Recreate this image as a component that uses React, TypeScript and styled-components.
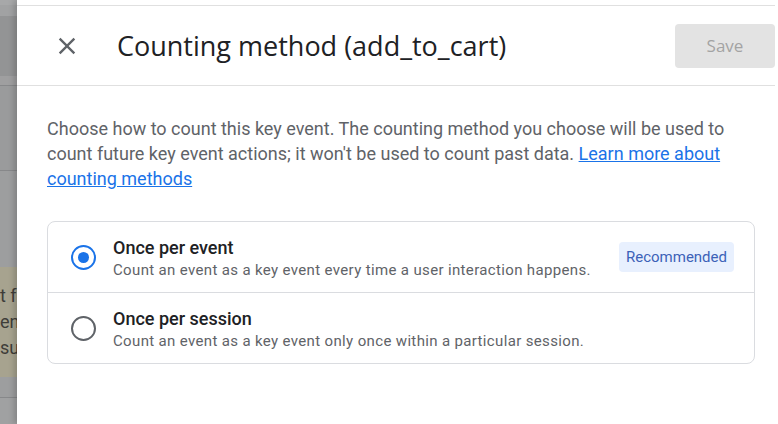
import * as React from 'react'
import styled, { createGlobalStyle } from 'styled-components'

const GlobalStyle = createGlobalStyle`
  html, body {
    margin: 0;
    padding: 0;
    background: #ffffff;
    font-family: Roboto, 'Liberation Sans', sans-serif;
  }
  * {
    box-sizing: border-box;
  }
`

const Shell = styled.div`
  display: flex;
  flex-direction: row;
  width: 778px;
  height: 424px;
  overflow: hidden;
`

/* the page behind the drawer, dimmed by a scrim */
const Backdrop = styled.div`
  display: flex;
  flex-direction: column;
  width: 17px;
  flex: 0 0 17px;
  overflow: hidden;
`
const Band = styled.div<{ h: number; tone: string; rule?: boolean }>`
  height: ${p => p.h}px;
  flex: 0 0 ${p => p.h}px;
  background: ${p => p.tone};
  border-bottom: ${p => (p.rule ? '1px solid #87888a' : 'none')};
`
const NoteBand = styled.div`
  flex: 0 0 110px;
  background: #a7a38f;
  color: #3e3d39;
  font-size: 18px;
  line-height: 26px;
  padding-top: 16px;
  white-space: nowrap;
`
const FillBand = styled.div`
  flex: 1 1 auto;
  background: #a0a1a2;
`

const Panel = styled.div`
  flex: 1 1 auto;
  display: flex;
  flex-direction: column;
  background: #ffffff;
  padding-top: 5px;
  box-shadow: -3px 0 6px rgba(0, 0, 0, 0.18);
  position: relative;
`
const Header = styled.div`
  display: flex;
  flex-direction: row;
  align-items: center;
  height: 81px;
  margin-right: 3px;
  border-top: 1px solid #e0e0e0;
  border-bottom: 1px solid #e0e0e0;
  padding-left: 36px;
  padding-right: 0;
`
const CloseButton = styled.div`
  width: 28px;
  height: 28px;
  display: flex;
  align-items: center;
  justify-content: center;
  color: #5f6368;
  cursor: pointer;
`
const Title = styled.div`
  flex: 1 1 auto;
  margin-left: 36px;
  font-family: 'Open Sans', 'Liberation Sans', sans-serif;
  font-size: 27px;
  color: #202124;
  white-space: nowrap;
`
const SaveButton = styled.div`
  width: 100px;
  height: 44px;
  border-radius: 4px;
  background: #e3e3e3;
  color: #a3a3a3;
  font-family: 'Open Sans', 'Liberation Sans', sans-serif;
  font-size: 17px;
  font-weight: 500;
  display: flex;
  align-items: center;
  justify-content: center;
`

const Body = styled.div`
  padding: 30px 23px 0 30px;
`
const Intro = styled.p`
  margin: 0;
  font-size: 18px;
  line-height: 25px;
  color: #5f6368;
`
const Link = styled.a`
  color: #1a73e8;
  text-decoration: underline;
  cursor: pointer;
`

const Card = styled.div`
  margin-top: 30px;
  border: 1px solid #dadce0;
  border-radius: 8px;
  overflow: hidden;
`
const OptionRow = styled.div`
  display: flex;
  flex-direction: row;
  align-items: center;
  height: 70px;
  padding: 0 20px 0 23px;
  & + & {
    border-top: 1px solid #dadce0;
    height: 71px;
  }
`
const Radio = styled.div<{ checked: boolean }>`
  width: 25px;
  height: 25px;
  flex: 0 0 25px;
  border-radius: 50%;
  border: 2px solid ${p => (p.checked ? '#1a73e8' : '#5f6368')};
  display: flex;
  align-items: center;
  justify-content: center;
  &::after {
    content: '';
    width: 11px;
    height: 11px;
    border-radius: 50%;
    background: ${p => (p.checked ? '#1a73e8' : 'transparent')};
  }
`
const OptionText = styled.div`
  flex: 1 1 auto;
  margin-left: 17px;
  padding-top: 3px;
  display: flex;
  flex-direction: column;
`
const OptionTitle = styled.div`
  font-size: 18px;
  font-weight: 500;
  line-height: 22px;
  color: #202124;
`
const OptionHint = styled.div`
  font-size: 15px;
  line-height: 20px;
  letter-spacing: 0.35px;
  color: #5f6368;
  margin-top: 1px;
`
const Badge = styled.div`
  height: 30px;
  padding: 0 7px;
  border-radius: 4px;
  background: #e8f0fe;
  color: #3c62b8;
  font-size: 15px;
  display: flex;
  align-items: center;
`

const CloseIcon = () => (
  <svg width="28" height="28" viewBox="0 0 24 24" fill="currentColor">
    <path d="M19 6.41L17.59 5 12 10.59 6.41 5 5 6.41 10.59 12 5 17.59 6.41 19 12 13.41 17.59 19 19 17.59 13.41 12z" />
  </svg>
)

const options = [
  {
    id: 'event',
    title: 'Once per event',
    hint: 'Count an event as a key event every time a user interaction happens.',
    recommended: true,
  },
  {
    id: 'session',
    title: 'Once per session',
    hint: 'Count an event as a key event only once within a particular session.',
    recommended: false,
  },
]

const App: React.FC = () => {
  const [method, setMethod] = React.useState('event')
  return (
    <Shell>
      <GlobalStyle />
      <Backdrop>
        <Band h={5} tone="#a7a8a9" />
        <Band h={11} tone="#a1a2a3" />
        <Band h={60} tone="#939495" />
        <Band h={10} tone="#9f9fa0" rule />
        <Band h={85} tone="#9a9b9c" rule />
        <Band h={96} tone="#9d9e9f" />
        <NoteBand>
          <div>t f</div>
          <div>en</div>
          <div>su</div>
        </NoteBand>
        <Band h={21} tone="#9d9e9f" rule />
        <FillBand />
      </Backdrop>
      <Panel>
        <Header>
          <CloseButton title="Close">
            <CloseIcon />
          </CloseButton>
          <Title>Counting method (add_to_cart)</Title>
          <SaveButton>Save</SaveButton>
        </Header>
        <Body>
          <Intro>
            Choose how to count this key event. The counting method you choose
            will be used to count future key event actions; it won't be used to
            count past data. <Link>Learn more about counting methods</Link>
          </Intro>
          <Card>
            {options.map(o => (
              <OptionRow key={o.id} onClick={() => setMethod(o.id)}>
                <Radio checked={method === o.id} />
                <OptionText>
                  <OptionTitle>{o.title}</OptionTitle>
                  <OptionHint>{o.hint}</OptionHint>
                </OptionText>
                {o.recommended ? <Badge>Recommended</Badge> : null}
              </OptionRow>
            ))}
          </Card>
        </Body>
      </Panel>
    </Shell>
  )
}

export default App
